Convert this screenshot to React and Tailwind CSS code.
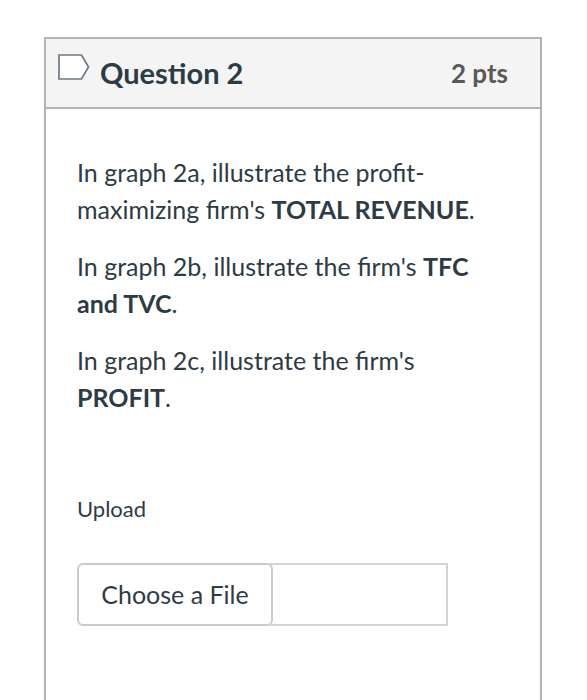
import React from "react";

function FlagIcon() {
  return (
    <svg width="32" height="26" viewBox="0 0 32 26" fill="#ffffff" stroke="#6b7986" strokeWidth="1.7" aria-hidden="true">
      <path d="M1 1H23.5L30.5 13L23.5 25H1Z" />
    </svg>
  );
}

export default function App() {
  return (
    <main className="flex min-h-screen flex-col bg-white pt-[37px] pr-[45px] pl-11 font-['Lato','Liberation_Sans',sans-serif] text-[#2d3b45]">
      <section className="flex grow flex-col border-2 border-b-0 border-[#b3b3b3]">
        <header className="flex h-[70px] items-center border-b-2 border-[#b3b3b3] bg-[#f4f4f4] pr-8 pl-3">
          <button type="button" aria-label="Flag question" className="mb-3">
            <FlagIcon />
          </button>
          <h1 className="ml-2.5 grow text-[29px] leading-9 font-bold">Question 2</h1>
          <span className="text-[26px] leading-9 font-bold text-[#595959]">2 pts</span>
        </header>
        <div className="px-[31px] pt-[45px] text-[25px] leading-[37px]">
          <div className="flex flex-col gap-5">
            <p>
              In graph 2a, illustrate the profit-
              <br />
              maximizing firm's <strong>TOTAL REVENUE</strong>.
            </p>
            <p>
              In graph 2b, illustrate the firm's <strong>TFC<br />and TVC</strong>.
            </p>
            <p>
              In graph 2c, illustrate the firm's
              <br />
              <strong>PROFIT</strong>.
            </p>
          </div>
          <label htmlFor="upload-name" className="mt-[74px] block text-[22px]">
            Upload
          </label>
          <div className="mt-9 flex h-[63px] w-[371px] max-w-full rounded-l-md bg-white">
            <button type="button" className="w-[196px] shrink-0 rounded-md border-2 border-[#c9cacd]">
              Choose a File
            </button>
            <input
              id="upload-name"
              type="text"
              readOnly
              className="-ml-1 min-w-0 grow border-2 border-l-0 border-[#d3d4d8] px-3 outline-none"
            />
          </div>
        </div>
      </section>
    </main>
  );
}
